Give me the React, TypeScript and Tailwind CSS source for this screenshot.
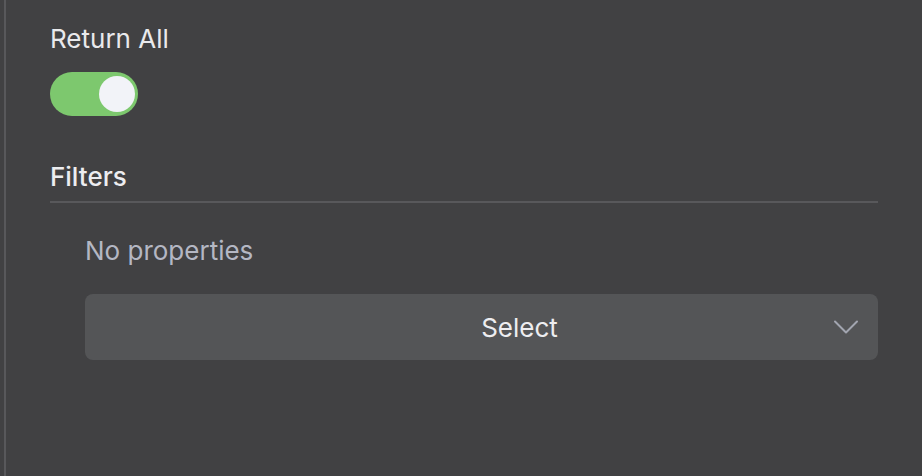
import { ChevronDown } from 'lucide-react'

export default function App() {
    return (
        <div className="w-[922px] h-[476px] bg-[#414143] pl-[4px] overflow-hidden" style={{ fontFamily: 'Inter, "Noto Sans", sans-serif' }}>
            <div className="h-full border-l-2 border-[#58585b] pl-[44px] pr-[44px] flex flex-col">
                {/* Return All */}
                <div className="mt-[22px] text-[26px] leading-[34px] text-[#e9e9ec]">Return All</div>
                <button className="mt-[16px] w-[88px] h-[44px] rounded-full bg-[#7dc86e] flex items-center justify-end pr-[3px]">
                    <span className="w-[36px] h-[36px] rounded-full bg-[#f2f3f8]" />
                </button>

                {/* Filters */}
                <div className="mt-[44px] text-[26px] leading-[34px] font-medium text-[#ededf0]">Filters</div>
                <div className="mt-[7px] h-[2px] bg-[#58585b]" />

                <div className="pl-[35px] flex flex-col">
                    <div className="mt-[31px] text-[26px] leading-[34px] text-[#b4b7c3]">No properties</div>
                    <div className="mt-[26px] h-[66px] rounded-[8px] bg-[#545557] flex items-center pl-[130px] pr-[10px]">
                        <span className="flex-1 text-center text-[26px] text-[#ededf0]">Select</span>
                        <ChevronDown className="text-[#a2a5b0]" size={44} strokeWidth={1.1} />
                    </div>
                </div>
            </div>
        </div>
    )
}
